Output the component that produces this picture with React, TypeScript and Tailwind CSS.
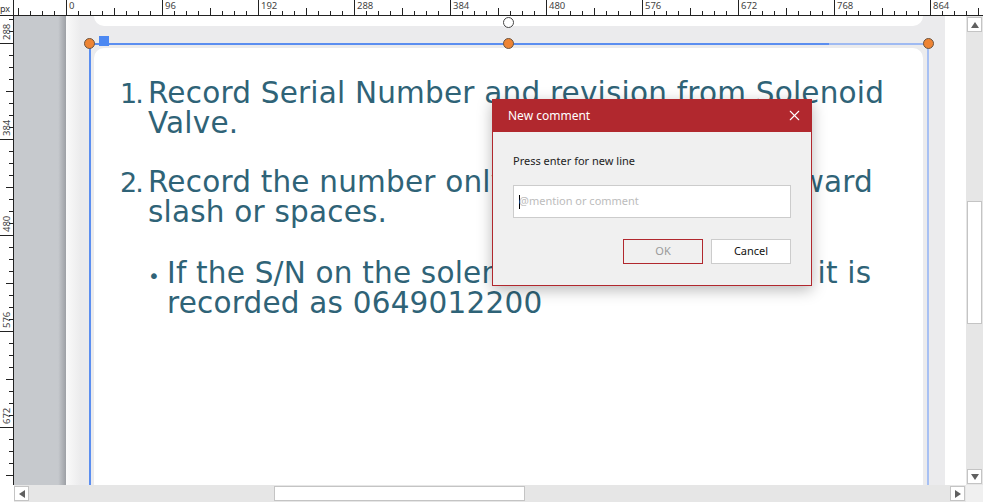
import { X } from "lucide-react";

const uiFont = { fontFamily: '"Noto Sans", "Open Sans", sans-serif' };
const slideFont = { fontFamily: '"DejaVu Sans", "Liberation Sans", sans-serif' };

function TopRuler() {
  const majors = [0, 96, 192, 288, 384, 480, 576, 672, 768, 864];
  const ticks: number[] = [];
  for (let x = 66 - 96; x < 983; x += 12) ticks.push(x);
  return (
    <svg width={969} height={16} className="block">
      {ticks.map((x) => {
        const rel = x - 66;
        const isMajor = ((rel % 96) + 96) % 96 === 0;
        const isMid = ((rel % 48) + 48) % 48 === 0;
        const sx = x - 14 + 0.5;
        const h = isMajor ? 16 : isMid ? 7 : 4;
        return <line key={x} x1={sx} x2={sx} y1={15 - h} y2={15} stroke="#222" strokeWidth={1} />;
      })}
      {majors.map((m) => (
        <text key={m} x={66 - 14 + m + 3} y={9} fontSize={9.5} fill="#444" style={uiFont}>
          {m}
        </text>
      ))}
      <line x1={0} x2={969} y1={15.5} y2={15.5} stroke="#222" />
    </svg>
  );
}

function LeftRuler() {
  const majors = [
    { y: 43, label: "288" },
    { y: 139, label: "384" },
    { y: 235, label: "480" },
    { y: 331, label: "576" },
    { y: 427, label: "672" },
  ];
  const ticks: number[] = [];
  for (let y = 43 - 96; y < 486; y += 12) ticks.push(y);
  return (
    <svg width={14} height={469} className="block">
      {ticks.map((y) => {
        const rel = y - 43;
        const isMajor = ((rel % 96) + 96) % 96 === 0;
        const isMid = ((rel % 48) + 48) % 48 === 0;
        const sy = y - 16 + 0.5;
        const w = isMajor ? 14 : isMid ? 7 : 4;
        return <line key={y} x1={13 - w} x2={13} y1={sy} y2={sy} stroke="#222" strokeWidth={1} />;
      })}
      {majors.map((m) => (
        <text
          key={m.label}
          x={0}
          y={0}
          fontSize={9.5}
          fill="#444"
          style={uiFont}
          transform={`translate(9.5 ${m.y - 16 - 3}) rotate(-90)`}
        >
          {m.label}
        </text>
      ))}
      <line x1={13.5} x2={13.5} y1={0} y2={469} stroke="#222" />
    </svg>
  );
}

function Handle({ className }: { className: string }) {
  return <div className={`absolute h-[11px] w-[11px] rounded-full border border-[#6b5440] bg-[#ee8434] ${className}`} />;
}

function Arrow({ dir }: { dir: "up" | "down" | "left" | "right" }) {
  const pts =
    dir === "up"
      ? "1,8 5,2 9,8"
      : dir === "down"
        ? "1,2 5,8 9,2"
        : dir === "left"
          ? "8,1 2,5 8,9"
          : "2,1 8,5 2,9";
  return (
    <svg width={10} height={10}>
      <polygon points={pts} fill="#606060" />
    </svg>
  );
}

function CommentDialog() {
  return (
    <div
      className="absolute left-[492px] top-[99px] flex h-[187px] w-[320px] flex-col shadow-[0_4px_14px_rgba(0,0,0,0.28)]"
      style={uiFont}
    >
      <div className="flex h-[33px] items-center justify-between bg-[#b1282e] pl-[16px] pr-[9px] text-white">
        <span className="text-[12px]">New comment</span>
        <X className="h-[17px] w-[17px]" strokeWidth={1.5} />
      </div>
      <div className="flex flex-1 flex-col border border-t-0 border-[#b1282e] bg-[#f0f0f0] px-[20px]">
        <p className="mt-[22px] text-[11px] leading-[14px] text-[#222]">Press enter for new line</p>
        <div className="mt-[17px] flex h-[33px] items-center border border-[#cccccc] bg-white pl-[5px] text-[11px] text-[#bcbcbc]">
          <span className="mr-[-1px] h-[14px] w-px bg-black" />
          <span>@mention or comment</span>
        </div>
        <div className="mt-[21px] flex justify-end gap-[8px]">
          <div className="flex h-[25px] w-[80px] items-center justify-center border border-[#b1282e] bg-[#f0f0f0] text-[11px] text-[#9a9a9a]">
            OK
          </div>
          <div className="flex h-[25px] w-[80px] items-center justify-center border border-[#cccccc] bg-white text-[11px] text-[#111]">
            Cancel
          </div>
        </div>
      </div>
    </div>
  );
}

export default function App() {
  return (
    <div className="relative flex h-[502px] w-[983px] flex-col overflow-hidden bg-white">
      {/* top ruler */}
      <div className="flex h-[16px] shrink-0">
        <div className="flex h-[16px] w-[14px] items-end border-b border-r border-[#222] text-[9px] leading-[12px] text-[#333]" style={uiFont}>
          px
        </div>
        <TopRuler />
      </div>

      <div className="flex min-h-0 flex-1">
        <LeftRuler />

        {/* canvas */}
        <div className="relative flex w-[952px] overflow-hidden">
          <div className="w-[52px] shrink-0 bg-gradient-to-r from-[#c6c9cd] from-[85%] to-[#9da0a5]" />
          <div className="w-[14px] shrink-0 bg-gradient-to-r from-[#fafafa] to-[#ececed]" />
          <div className="flex w-[865px] shrink-0 flex-col bg-[#ebebed]">
            <div className="ml-[14px] mr-[22px] h-[10px] rounded-b-[10px] bg-white" />
            <div className="ml-[14px] mr-[22px] mt-[22px] flex-1 rounded-t-[10px] bg-white pl-[26px] pt-[30px] text-[#2f6377]" style={slideFont}>
              <div className="text-[29.5px] leading-[30px] tracking-[0.2px]">
                <div className="flex items-baseline">
                  <span className="w-[28px] shrink-0 text-[27px] tracking-[-2px]">1.</span>
                  <span>
                    Record Serial Number and revision from Solenoid
                    <br />
                    Valve.
                  </span>
                </div>
                <div className="mt-[29px] flex items-baseline">
                  <span className="w-[28px] shrink-0 text-[27px] tracking-[-2px]">2.</span>
                  <span>
                    Record the number only without a dash, forward
                    <br />
                    slash or spaces.
                  </span>
                </div>
                <div className="mt-[31px] flex items-baseline pl-[28px]">
                  <span className="w-[19px] shrink-0 text-[20px]">•</span>
                  <span>
                    If the S/N on the solenoid is 0649 / 012200 it is
                    <br />
                    recorded as 0649012200
                  </span>
                </div>
              </div>
            </div>
          </div>
          <div className="w-[21px] shrink-0 bg-white" />

          {/* selection overlay */}
          <div className="absolute left-[75px] top-[27px] h-[2px] w-[740px] bg-[#5b8ef0]" />
          <div className="absolute left-[815px] top-[27px] h-[2px] w-[100px] bg-[#9fbaf2]" />
          <div className="absolute bottom-0 left-[75px] top-[27px] w-[2px] bg-[#5b8ef0]" />
          <div className="absolute bottom-0 left-[913px] top-[27px] w-[2px] bg-[#a7c0f3]" />
          <div className="absolute left-[85px] top-[20px] h-[10px] w-[10px] bg-[#4c88f2]" />
          <div className="absolute left-[489px] top-[1px] h-[11px] w-[11px] rounded-full border border-[#444] bg-white" />
          <Handle className="left-[70px] top-[22px]" />
          <Handle className="left-[489px] top-[22px]" />
          <Handle className="left-[909px] top-[22px]" />
        </div>

        {/* vertical scrollbar */}
        <div className="flex w-[17px] flex-col bg-[#e6e6e6] pl-px">
          <div className="mt-px flex h-[15px] w-[15px] items-center justify-center border border-[#c4c4c4] bg-white">
            <Arrow dir="up" />
          </div>
          <div className="mt-[169px] h-[123px] w-[15px] border border-[#c4c4c4] bg-white" />
          <div className="mt-auto mb-px flex h-[15px] w-[15px] items-center justify-center border border-[#c4c4c4] bg-white">
            <Arrow dir="down" />
          </div>
        </div>
      </div>

      {/* horizontal scrollbar */}
      <div className="flex h-[17px] shrink-0">
        <div className="w-[14px] shrink-0 bg-white" />
        <div className="flex w-[952px] items-center bg-[#e6e6e6]">
          <div className="flex h-[15px] w-[15px] items-center justify-center border border-[#c4c4c4] bg-white">
            <Arrow dir="left" />
          </div>
          <div className="ml-[245px] h-[15px] w-[251px] border border-[#c4c4c4] bg-white" />
          <div className="ml-auto mr-px flex h-[15px] w-[15px] items-center justify-center border border-[#c4c4c4] bg-white">
            <Arrow dir="right" />
          </div>
        </div>
        <div className="flex-1 bg-[#f0f0f0]" />
      </div>

      <CommentDialog />
    </div>
  );
}
